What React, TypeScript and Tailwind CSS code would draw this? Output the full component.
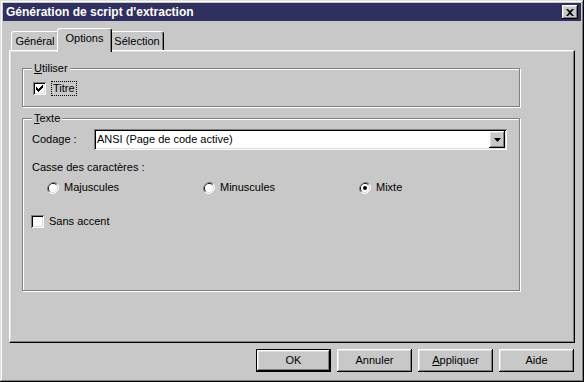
import React from "react";

const raised =
  "shadow-[inset_-1px_-1px_#000,inset_1px_1px_#fff,inset_-2px_-2px_#808080,inset_2px_2px_#dfdfdf]";
const sunken =
  "shadow-[inset_1px_1px_#808080,inset_-1px_-1px_#fff,inset_2px_2px_#000,inset_-2px_-2px_#dfdfdf]";

function Checkbox({ checked }: { checked?: boolean }) {
  return (
    <div className={`w-[13px] h-[13px] bg-white shrink-0 flex items-center justify-center ${sunken}`}>
      {checked && (
        <svg width="7" height="7" viewBox="0 0 7 7">
          <path d="M0 2h1v1h1v1h1V3h1V2h1V1h1V0h1v3H6v1H5v1H4v1H3v1H2V6H1V5H0z" fill="#000" />
        </svg>
      )}
    </div>
  );
}

function Radio({ label, checked }: { label: string; checked?: boolean }) {
  return (
    <div className="w-[156px] flex items-center gap-[5px]">
      <svg width="12" height="12" viewBox="0 0 12 12" className="shrink-0">
        <path d="M10.2 1.8A6 6 0 0 0 1.8 10.2" stroke="#808080" strokeWidth="1" fill="none" />
        <path d="M1.8 10.2A6 6 0 0 0 10.2 1.8" stroke="#fff" strokeWidth="1" fill="none" />
        <path d="M9.5 2.5A5 5 0 0 0 2.5 9.5" stroke="#000" strokeWidth="1" fill="none" />
        <path d="M2.5 9.5A5 5 0 0 0 9.5 2.5" stroke="#dfdfdf" strokeWidth="1" fill="none" />
        <circle cx="6" cy="6" r="4" fill="#fff" />
        {checked && <circle cx="6" cy="6" r="2" fill="#000" />}
      </svg>
      <span>{label}</span>
    </div>
  );
}

function Tab({ label, active, width }: { label: string; active?: boolean; width: string }) {
  return (
    <div
      className={
        active
          ? `relative z-10 -mx-[2px] -mb-[2px] ${width} h-[24px] pb-[4px] bg-[#c8c8c8] border-t border-l border-white border-r border-r-black rounded-t-[3px] shadow-[inset_-1px_0_#808080] flex items-center justify-center`
          : `${width} h-[19px] bg-[#c8c8c8] border-t border-l border-white border-r border-r-black rounded-t-[3px] shadow-[inset_-1px_0_#808080] flex items-center justify-center`
      }
    >
      {label}
    </div>
  );
}

function Button({ children, isDefault }: { children: React.ReactNode; isDefault?: boolean }) {
  return (
    <div className={`w-[75px] h-[23px] ${isDefault ? "border border-black" : ""}`}>
      <div className={`w-full h-full flex items-center justify-center ${raised}`}>{children}</div>
    </div>
  );
}

export default function App() {
  return (
    <div className="w-[584px] h-[382px] bg-[#c8c8c8] p-[3px] flex flex-col text-[11px] leading-[13px] text-black font-['Liberation_Sans',Arial,sans-serif] shadow-[inset_-1px_-1px_#000,inset_1px_1px_#dfdfdf,inset_-2px_-2px_#808080,inset_2px_2px_#fff]">
      {/* Title bar */}
      <div className="h-[18px] bg-[#303060] flex items-center justify-between pl-[3px] pr-[3px]">
        <span className="text-white font-bold text-[12px]">Génération de script d'extraction</span>
        <div className={`w-[16px] h-[14px] bg-[#c8c8c8] flex items-center justify-center ${raised}`}>
          <svg width="8" height="7" viewBox="0 0 8 7">
            <path d="M0 0h2l2 2 2-2h2L5 3.5 8 7H6L4 5 2 7H0l3-3.5z" fill="#000" />
          </svg>
        </div>
      </div>

      {/* Tabs */}
      <div className="mx-[6px] mt-[7px] flex flex-col">
        <div className="h-[22px] flex items-end pl-[2px]">
          <Tab label="Général" width="w-[48px]" />
          <Tab label="Options" width="w-[55px]" active />
          <Tab label="Sélection" width="w-[54px]" />
        </div>

        <div className="h-[293px] border-t border-l border-white border-r border-b border-r-black border-b-black shadow-[inset_-1px_-1px_#808080,inset_1px_1px_#dfdfdf] pl-[12px] pt-[17px]">
          {/* Utiliser */}
          <div className="relative w-[498px] h-[39px] border border-[#808080] shadow-[inset_1px_1px_#fff,1px_1px_#fff] pl-[10px] pt-[12px]">
            <span className="absolute -top-[7px] left-[9px] px-[2px] bg-[#c8c8c8]">
              <span className="underline">U</span>tiliser
            </span>
            <div className="flex items-center gap-[5px]">
              <Checkbox checked />
              <span className="border border-dotted border-black px-[1px] leading-[13px]">Titre</span>
            </div>
          </div>

          {/* Texte */}
          <div className="relative mt-[11px] w-[498px] h-[173px] border border-[#808080] shadow-[inset_1px_1px_#fff,1px_1px_#fff] pt-[10px]">
            <span className="absolute -top-[7px] left-[9px] px-[2px] bg-[#c8c8c8]">
              <span className="underline">T</span>exte
            </span>
            <div className="flex items-center pl-[9px]">
              <span className="w-[62px]">Codage :</span>
              <div className={`w-[413px] h-[21px] bg-white flex items-center justify-between pl-[3px] pr-[2px] ${sunken}`}>
                <span>ANSI (Page de code active)</span>
                <div className={`w-[16px] h-[17px] bg-[#c8c8c8] flex items-center justify-center ${raised}`}>
                  <svg width="7" height="4" viewBox="0 0 7 4">
                    <path d="M0 0h7L3.5 4z" fill="#000" />
                  </svg>
                </div>
              </div>
            </div>
            <div className="mt-[11px] pl-[9px]">Casse des caractères :</div>
            <div className="mt-[7px] pl-[24px] flex">
              <Radio label="Majuscules" />
              <Radio label="Minuscules" />
              <Radio label="Mixte" checked />
            </div>
            <div className="mt-[21px] pl-[8px] flex items-center gap-[5px]">
              <Checkbox />
              <span>Sans accent</span>
            </div>
          </div>
        </div>
      </div>

      {/* Buttons */}
      <div className="mt-[6px] pr-[7px] flex justify-end gap-[6px]">
        <Button isDefault>OK</Button>
        <Button>Annuler</Button>
        <Button>
          <span>
            <span className="underline">A</span>ppliquer
          </span>
        </Button>
        <Button>Aide</Button>
      </div>
    </div>
  );
}
